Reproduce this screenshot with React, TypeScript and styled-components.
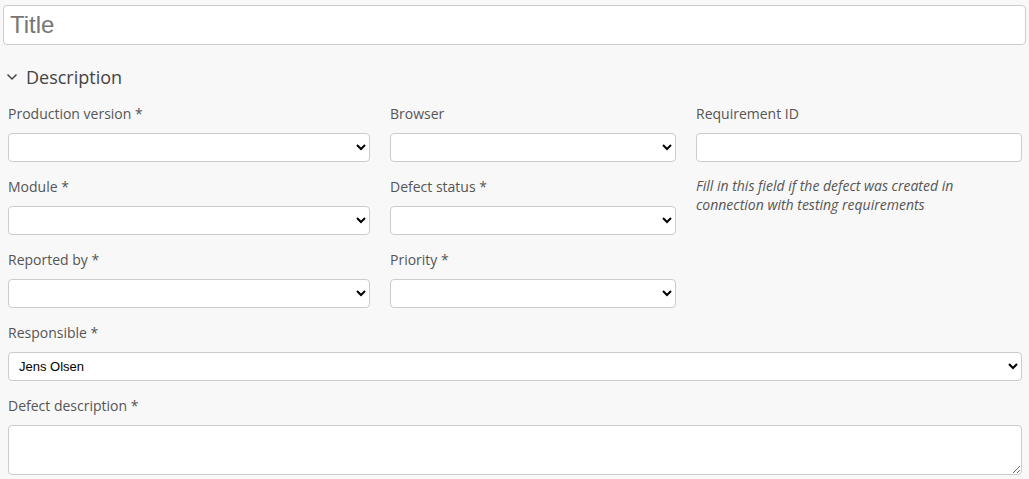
import React from "react";
import styled, { createGlobalStyle } from "styled-components";

const Global = createGlobalStyle`
  html, body { margin: 0; padding: 0; background: #f8f8f8; }
  body { font-family: "Open Sans", "Liberation Sans", sans-serif; color: #555; }
  * { box-sizing: border-box; }
`;

const Page = styled.div`
  padding: 5px 3px 0 3px;
`;

const TitleInput = styled.input`
  display: block;
  width: 100%;
  height: 40px;
  border: 1px solid #ccc;
  border-radius: 4px;
  background: #fff;
  padding: 0 6px;
  font-family: Arial, "Liberation Sans", sans-serif;
  font-size: 24px;
  color: #333;
  outline: none;
  &::placeholder { color: #767676; }
`;

const SectionHeader = styled.div`
  display: flex;
  align-items: center;
  gap: 8px;
  margin: 19px 0 0 3px;
  height: 26px;
  font-size: 18px;
  color: #444;
`;

const Body = styled.div`
  padding: 0 5px;
  margin-top: 14px;
`;

const Grid = styled.div`
  display: grid;
  grid-template-columns: 362px 286px 326px;
  column-gap: 20px;
`;

const Field = styled.div<{ $span?: boolean }>`
  display: flex;
  flex-direction: column;
  ${(p) => (p.$span ? "grid-column: 1 / 4; width: 1014px;" : "")}
`;

const Label = styled.label`
  font-size: 14px;
  line-height: 19px;
  height: 19px;
  color: #555;
  margin-bottom: 10px;
`;

const Select = styled.select`
  height: 29px;
  width: 100%;
  border: 1px solid #ccc;
  border-radius: 4px;
  background: #fff;
  font-family: Arial, "Liberation Sans", sans-serif;
  font-size: 13px;
  color: #000;
  padding: 0 6px;
  margin-bottom: 15px;
  outline: none;
`;

const TextInput = styled.input`
  height: 29px;
  width: 100%;
  border: 1px solid #ccc;
  border-radius: 4px;
  background: #fff;
  margin-bottom: 14px;
  outline: none;
`;

const Hint = styled.div`
  font-size: 14px;
  line-height: 19px;
  font-style: italic;
  color: #555;
`;

const TextArea = styled.textarea`
  width: 100%;
  height: 50px;
  border: 1px solid #ccc;
  border-radius: 4px;
  background: #fff;
  display: block;
  outline: none;
`;

const Col3 = styled.div`
  grid-row: 1 / span 3;
  grid-column: 3;
  display: flex;
  flex-direction: column;
`;

const Chevron = () => (
  <svg width="12" height="8" viewBox="0 0 12 8" fill="none">
    <path d="M1.5 1.5 L6 6 L10.5 1.5" stroke="#444" strokeWidth="1.5" />
  </svg>
);

export default function App() {
  return (
    <>
      <Global />
      <Page>
        <TitleInput placeholder="Title" />
        <SectionHeader>
          <Chevron />
          <span>Description</span>
        </SectionHeader>
        <Body>
          <Grid>
            <Field>
              <Label>Production version *</Label>
              <Select><option></option></Select>
            </Field>
            <Field>
              <Label>Browser</Label>
              <Select><option></option></Select>
            </Field>
            <Col3>
              <Label>Requirement ID</Label>
              <TextInput />
              <Hint>
                Fill in this field if the defect was created in
                <br />
                connection with testing requirements
              </Hint>
            </Col3>
            <Field>
              <Label>Module *</Label>
              <Select><option></option></Select>
            </Field>
            <Field>
              <Label>Defect status *</Label>
              <Select><option></option></Select>
            </Field>
            <Field>
              <Label>Reported by *</Label>
              <Select><option></option></Select>
            </Field>
            <Field>
              <Label>Priority *</Label>
              <Select><option></option></Select>
            </Field>
            <Field $span>
              <Label>Responsible *</Label>
              <Select defaultValue="jens"><option value="jens">Jens Olsen</option></Select>
            </Field>
            <Field $span>
              <Label>Defect description *</Label>
              <TextArea />
            </Field>
          </Grid>
        </Body>
      </Page>
    </>
  );
}
